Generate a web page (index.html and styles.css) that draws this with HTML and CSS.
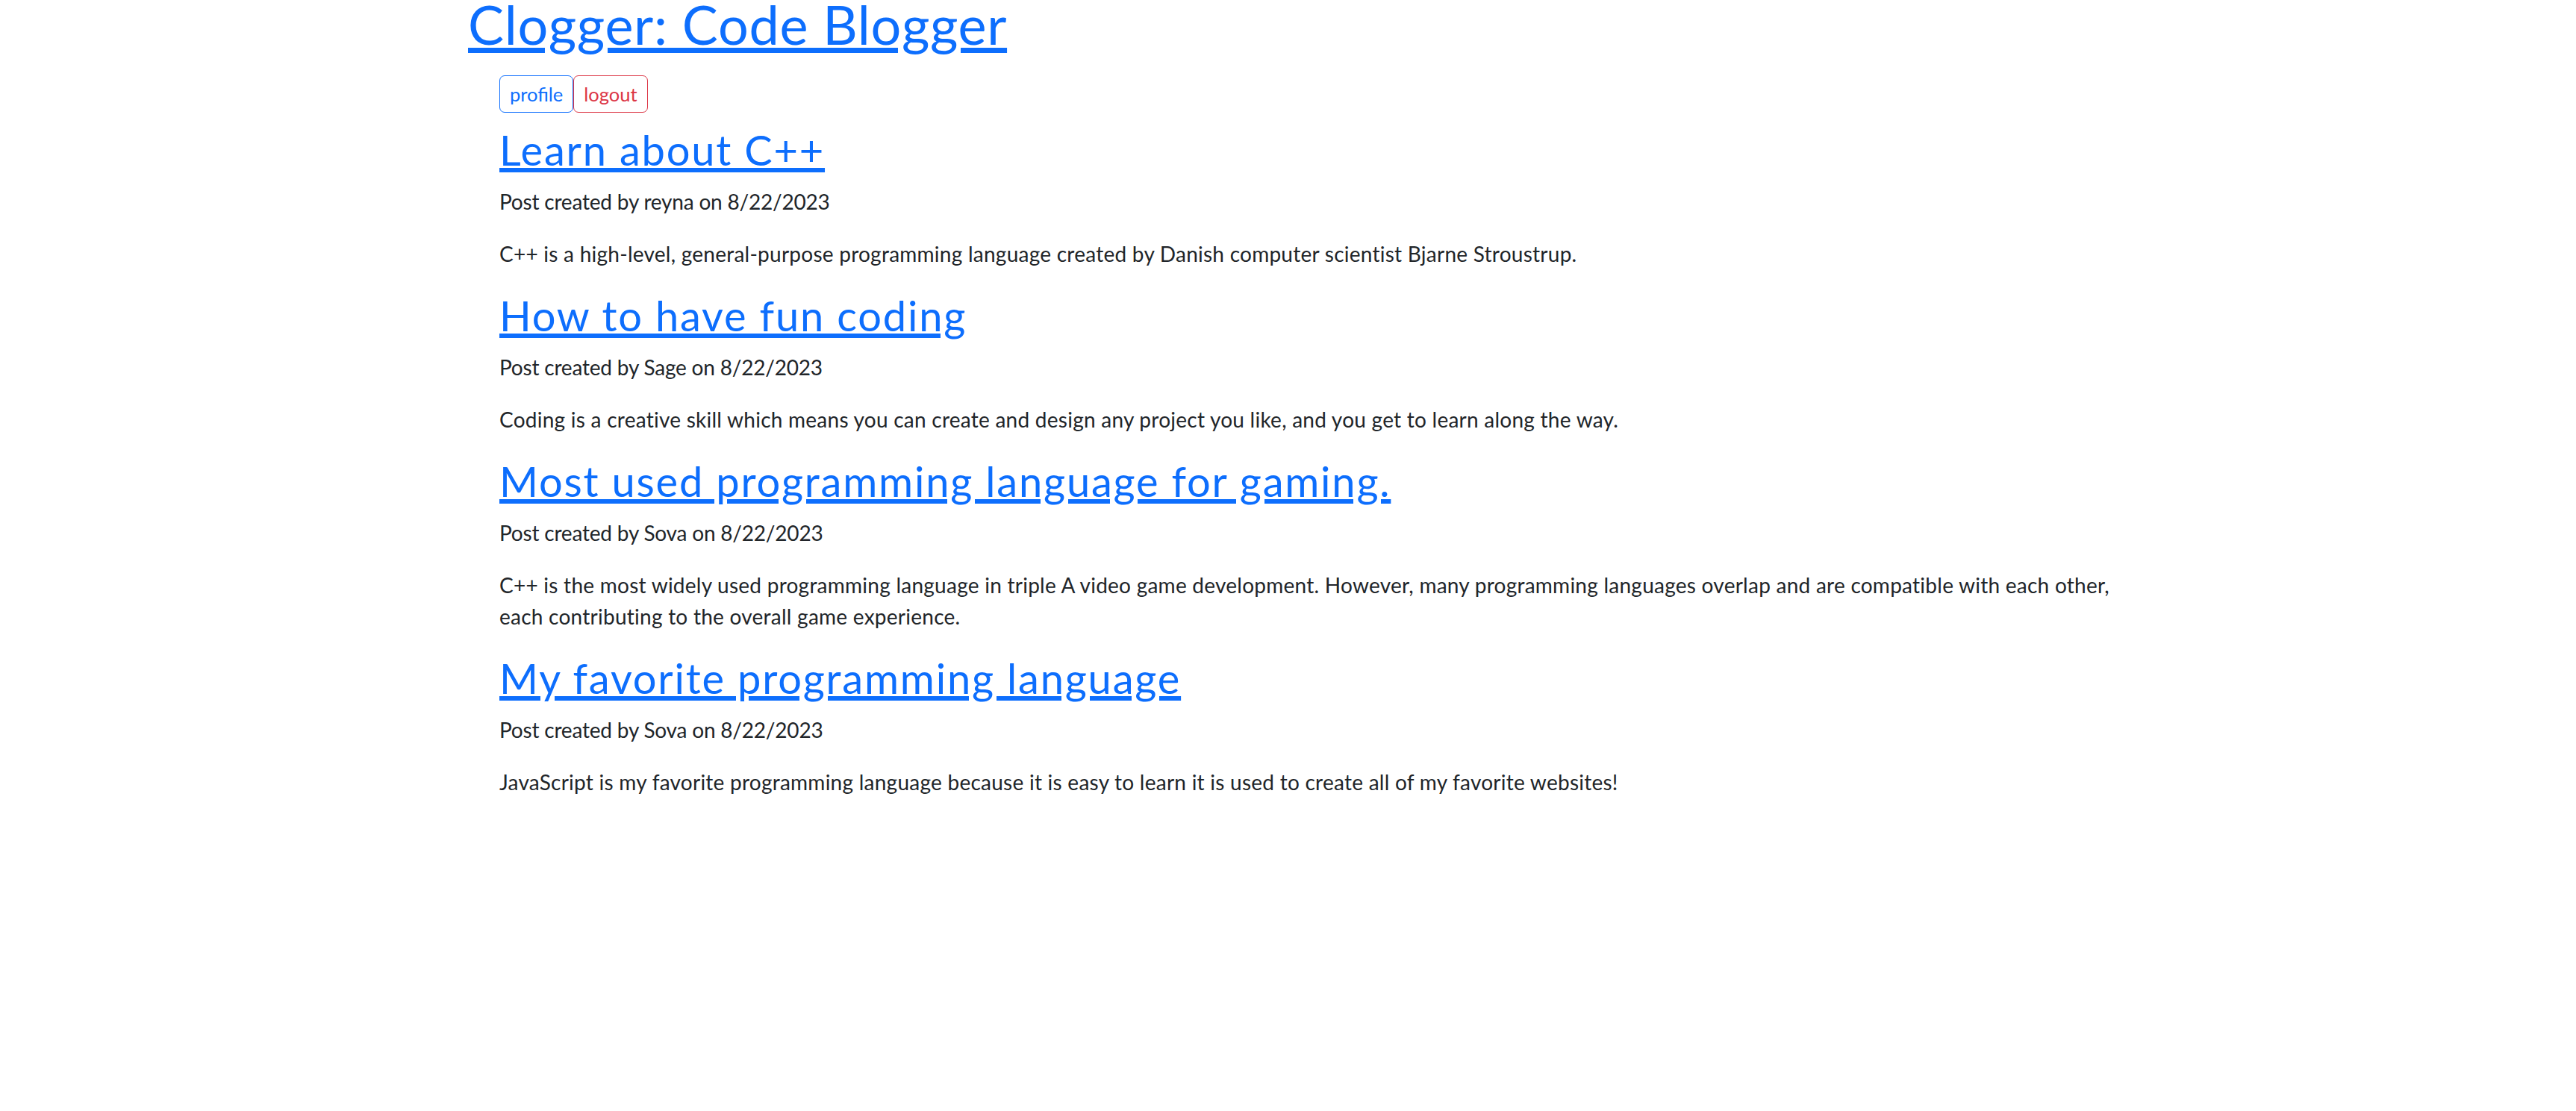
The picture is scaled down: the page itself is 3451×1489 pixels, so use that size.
FILE: index.html
```html
<!DOCTYPE html>
<html lang="en">
<head>
<meta charset="utf-8">
<title>Clogger: Code Blogger</title>
<link rel="stylesheet" href="styles.css">
</head>
<body>
<div class="page">
  <h1 class="site-title"><a href="#">Clogger: Code Blogger</a></h1>
  <main class="content">
    <div class="actions">
      <button class="btn btn-outline-primary" type="button">profile</button><button class="btn btn-outline-danger" type="button">logout</button>
    </div>
    <article class="post">
      <h2 class="post-title"><a href="#">Learn about C++</a></h2>
      <p class="post-meta">Post created by reyna on 8/22/2023</p>
      <p class="post-body">C++ is a high-level, general-purpose programming language created by Danish computer scientist Bjarne Stroustrup.</p>
    </article>
    <article class="post">
      <h2 class="post-title"><a href="#">How to have fun coding</a></h2>
      <p class="post-meta">Post created by Sage on 8/22/2023</p>
      <p class="post-body">Coding is a creative skill which means you can create and design any project you like, and you get to learn along the way.</p>
    </article>
    <article class="post">
      <h2 class="post-title"><a href="#">Most used programming language for gaming.</a></h2>
      <p class="post-meta">Post created by Sova on 8/22/2023</p>
      <p class="post-body">C++ is the most widely used programming language in triple A video game development. However, many programming languages overlap and are compatible with each other, each contributing to the overall game experience.</p>
    </article>
    <article class="post">
      <h2 class="post-title"><a href="#">My favorite programming language</a></h2>
      <p class="post-meta">Post created by Sova on 8/22/2023</p>
      <p class="post-body">JavaScript is my favorite programming language because it is easy to learn it is used to create all of my favorite websites!</p>
    </article>
  </main>
</div>
</body>
</html>
```

FILE: styles.css
```css
html, body {
  margin: 0;
  padding: 0;
  background: #ffffff;
}

body {
  font-family: Lato, "Liberation Sans", sans-serif;
  font-size: 28px;
  line-height: 42px;
  color: #212529;
}

a {
  color: #0d6efd;
}

.page {
  margin-left: 627px;
  width: 2245px;
}

.site-title {
  margin: 0;
  font-size: 72px;
  font-weight: 400;
  line-height: 64px;
  letter-spacing: 0.7px;
}

.site-title a {
  text-decoration-thickness: 7px;
  text-underline-offset: 4px;
}

.content {
  margin-left: 42px;
}

.actions {
  display: flex;
  margin-top: 37px;
  margin-bottom: 16px;
}

.btn {
  font-family: inherit;
  font-size: 25.5px;
  line-height: 36px;
  padding: 6px 13px;
  background: #ffffff;
  border: 1.5px solid;
  border-radius: 7px;
  cursor: pointer;
}

.btn-outline-primary {
  color: #0d6efd;
  border-color: #0d6efd;
}

.btn-outline-danger {
  color: #dc3545;
  border-color: #dc3545;
}

.post-title {
  margin: 0 0 14px;
  font-size: 56px;
  font-weight: 400;
  line-height: 68px;
  letter-spacing: 1.8px;
}

.post-title a {
  text-decoration-thickness: 5.5px;
  text-underline-offset: 3px;
}

.post-meta,
.post-body {
  margin: 0 0 28px;
}

.post-meta {
  letter-spacing: -0.2px;
}

.post-body {
  letter-spacing: 0.25px;
}
```
